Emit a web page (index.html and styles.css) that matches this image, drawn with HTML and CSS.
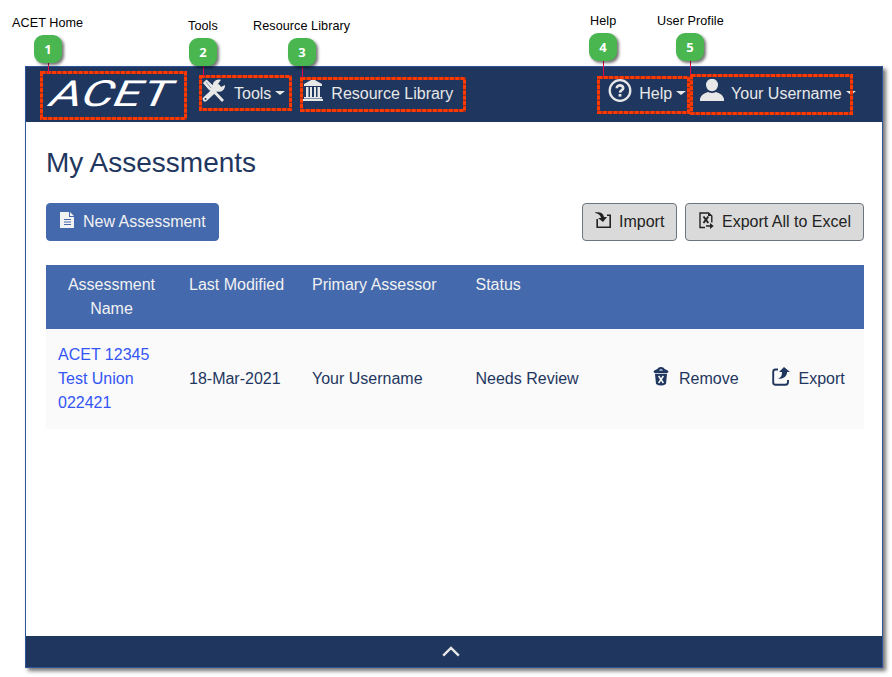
FILE: index.html
```html
<!DOCTYPE html>
<html lang="en">
<head>
<meta charset="utf-8">
<title>My Assessments</title>
<link rel="stylesheet" href="styles.css">
</head>
<body>
<div class="window">
  <header class="navbar">
    <svg class="logo" width="136" height="30" viewBox="0 0 136 30"><text class="logo-text" x="0" y="0" textLength="121" lengthAdjust="spacingAndGlyphs" transform="translate(0 27) skewX(-24)">ACET</text></svg>
    <a class="nav-item nav-tools">
      <svg width="24" height="24" viewBox="0 0 24 24"><path d="M3 3L21 22" stroke="#e8e8e8" stroke-width="2.8"/><path d="M1.5 4L4.5 1L12 8L8 11.5Z" fill="#e8e8e8" stroke="#e8e8e8" stroke-linejoin="round"/><path d="M4 3L9 9" stroke="#8795aa" stroke-width="1"/><path d="M3.2 20L16 8" stroke="#e8e8e8" stroke-width="5" stroke-linecap="round"/><path d="M19 .8A6.2 6.2 0 1 0 23 6L19 8L16 5Z" fill="#e8e8e8"/><circle cx="3.5" cy="20" r="1" fill="#1f375f"/></svg>
      <span>Tools</span><i class="caret"></i>
    </a>
    <a class="nav-item nav-library">
      <svg width="20" height="22" viewBox="0 0 20 22"><path fill="#e8e8e8" d="M10 0L19 5V7H1V5ZM3 8h2.5v10H3zM7 8h2v10H7zM11 8h2v10h-2zM14.5 8H17v10h-2.5zM1 18h18v1.5H1zM0 20h20v2H0z"/></svg>
      <span>Resource Library</span>
    </a>
    <a class="nav-item nav-help">
      <svg width="24" height="24" viewBox="0 0 24 24" fill="none" stroke="#e8e8e8"><circle cx="12" cy="11.5" r="10.3" stroke-width="2.3"/><path d="M8.8 9.2C8.8 5.4 15.3 5.6 15.2 9.1C15.1 11.3 12.1 11.3 12 13.6" stroke-width="2.6"/><path d="M12 15v2.6" stroke-width="2.8"/></svg>
      <span>Help</span><i class="caret"></i>
    </a>
    <a class="nav-item nav-user">
      <svg width="24" height="22" viewBox="0 0 24 22"><ellipse cx="12" cy="6" rx="6" ry="6.2" fill="#e8e8e8"/><path d="M0 22V20C1 15.5 5 14 8 13Q12 15 16 13C19 14 23 15.5 24 20V22Z" fill="#e8e8e8"/></svg>
      <span>Your Username</span><i class="caret"></i>
    </a>
  </header>
  <main>
    <h1>My Assessments</h1>
    <div class="toolbar">
      <button class="btn primary"><svg width="14" height="16" viewBox="0 0 14 16"><path fill="#f2f2f2" d="M0 0H9V5H14V16H0ZM10 0L14 4H10Z"/><path stroke="#4469ad" d="M4 7.5h7M4 10h7M4 12.5h7"/></svg><span>New Assessment</span></button>
      <button class="btn import"><svg width="17" height="17" viewBox="0 0 17 17"><path d="M2.2 7V15.2H15.2V3.2H12" fill="none" stroke="#222" stroke-width="1.6"/><path d="M0 .5C5-.5 8.5 1 9 5H12L8 10L3 6H6C5.5 3 3 1.5 0 1Z" fill="#222"/></svg><span>Import</span></button>
      <button class="btn excel"><svg width="15" height="17" viewBox="0 0 15 17"><path d="M6 15.5H1V1H9.5L12.8 4V10.5" fill="none" stroke="#222" stroke-width="1.4"/><path d="M9 1V4H13Z" fill="#222"/><path d="M4.5 4.5L9.3 11M9.3 4.5L4.5 11" stroke="#222" stroke-width="1.9"/><path d="M7 13.2H11V11L14.7 14L11 17V14.7H7Z" fill="#222"/></svg><span>Export All to Excel</span></button>
    </div>
    <table>
      <colgroup><col class="c-name"><col class="c-date"><col class="c-assessor"><col class="c-status"><col class="c-remove"><col class="c-export"></colgroup>
      <thead><tr><th class="center">Assessment Name</th><th>Last Modified</th><th>Primary Assessor</th><th>Status</th><th></th><th></th></tr></thead>
      <tbody><tr>
        <td><a class="link">ACET 12345 Test Union 022421</a></td><td>18-Mar-2021</td><td>Your Username</td><td>Needs Review</td>
        <td><span class="action"><svg width="16" height="19" viewBox="0 0 16 19"><path d="M.5 5C1 2 5 3 5 1Q8-1 11 1C11 3 15 2 15.5 5L14 6.2H2ZM2 7H14L13 17Q8 20 3 17Z" fill="#1f375f"/><path d="M6 3.5Q8 1 10 3.5Z" fill="#fafafa"/><path d="M5.6 9L10.4 16M10.4 9L5.6 16" stroke="#fafafa" stroke-width="1.5"/></svg><span class="remove-label">Remove</span></span></td>
        <td><span class="action"><svg width="18" height="19" viewBox="0 0 18 19"><path d="M6 2.5H3.5Q1.2 2.5 1.2 5V15.5Q1.2 17.7 3.5 17.7H13.5Q16 17.7 16 15V13" fill="none" stroke="#1f375f" stroke-width="1.9"/><path d="M12 0L18 5H15C15 9 12 12 6 12C9.5 10 10 8 10 5H7Z" fill="#1f375f"/></svg><span class="export-label">Export</span></span></td>
      </tr></tbody>
    </table>
  </main>
  <footer><svg width="18" height="11" viewBox="0 0 18 11"><path d="M1.2 9.6L9 2L16.8 9.6" fill="none" stroke="#e8e8e8" stroke-width="2.4"/></svg></footer>
</div>

<svg class="frames" width="892" height="130" viewBox="0 0 892 130">
  <g class="frame-base"><path d="M41.5 72.5H185.5V118.5H41.5Z"/><path d="M200.5 76.5H290.5V109.5H200.5Z"/><path d="M301.5 78.5H464.5V110.5H301.5Z"/><path d="M598.5 77.5H688.5V112.5H598.5Z"/><path d="M691.5 75.5H851.5V113.5H691.5Z"/></g>
  <g class="frame-dash"><path d="M41.5 72.5H185.5V118.5H41.5Z"/><path d="M200.5 76.5H290.5V109.5H200.5Z"/><path d="M301.5 78.5H464.5V110.5H301.5Z"/><path d="M598.5 77.5H688.5V112.5H598.5Z"/><path d="M691.5 75.5H851.5V113.5H691.5Z"/></g>
  <path class="leader" d="M48.5 62V73M203.5 65V76M302.5 65V78M603.5 61V77M690.5 61V75"/>
</svg>
<span class="note n1">ACET Home</span><span class="note n2">Tools</span><span class="note n3">Resource Library</span><span class="note n4">Help</span><span class="note n5">User Profile</span>
<span class="badge b1">1</span><span class="badge b2">2</span><span class="badge b3">3</span><span class="badge b4">4</span><span class="badge b5">5</span>
</body>
</html>
```
FILE: styles.css
```css
* { box-sizing: border-box; }
body { margin: 0; padding: 66px 9px 9px 25px; height: 677px; overflow: hidden; background: #fff; font: 16px/24px "Liberation Sans", Arial, sans-serif; color: #1f375f; position: relative; }
.window { width: 858px; height: 602px; border: 1px solid #2f549a; display: flex; flex-direction: column; background: #fff; box-shadow: 3px 3px 4px rgba(0,0,0,.55); }
.navbar { height: 55px; flex: none; background: #1f375f; display: flex; align-items: flex-start; padding-left: 20px; color: #e8e8e8; }
.logo { margin-top: 12px; flex: none; overflow: visible; }
.logo-text { font: 36px Roboto, sans-serif; fill: #fff; }
.nav-item { display: flex; align-items: flex-start; padding-top: 12px; white-space: nowrap; }
.nav-item svg { flex: none; }
.nav-item span { margin-top: 3px; }
.nav-tools { margin-left: 20px; }
.nav-tools span { margin-left: 8px; }
.nav-library { margin-left: 18px; }
.nav-library span { margin-left: 8px; }
.nav-help { margin-left: 155px; }
.nav-help span { margin-left: 7px; }
.nav-user { margin-left: 14px; }
.nav-user span { margin-left: 7px; }
.caret { margin: 12px 0 0 4px; border: 5px solid transparent; border-top: 4.5px solid #e8e8e8; border-bottom: 0; }
main { flex: 1; padding: 24px 18px 0 20px; }
h1 { margin: 0; font-size: 28px; font-weight: 400; line-height: 34px; }
.toolbar { display: flex; margin-top: 23px; }
.btn { height: 38px; border: 1px solid #6c757d; border-radius: 4px; display: flex; align-items: flex-start; font: inherit; white-space: nowrap; background: #dadada; color: #222; padding: 6px 12px; }
.btn svg { flex: none; margin-top: 2px; }
.btn.primary { width: 173px; background: #4469ad; border-color: #4469ad; color: #f2f2f2; padding-left: 13px; }
.primary span { margin-left: 9px; }
.import { width: 95px; margin-left: auto; }
.import span { margin-left: 7px; }
.excel { width: 179px; margin-left: 8px; padding-left: 13px; }
.excel span { margin-left: 8px; }
table { width: 818px; margin-top: 24px; table-layout: fixed; border-collapse: collapse; }
.c-name { width: 131px; }
.c-date { width: 123px; }
.c-assessor { width: 163.5px; }
.c-status { width: 177.5px; }
.c-remove { width: 119px; }
.c-export { width: 104px; }
th { height: 64px; padding: 8px 12px; background: #4469ad; color: #f2f2f2; font-weight: 400; text-align: left; vertical-align: top; }
th.center { text-align: center; }
td { height: 100px; padding: 12px; background: #fafafa; vertical-align: middle; white-space: nowrap; }
td:first-child { white-space: normal; }
.link { color: #3355f5; }
.action { display: flex; height: 24px; }
.remove-label { margin-left: 10px; }
.export-label { margin-left: 8.5px; }
footer { height: 31px; flex: none; background: #1f375f; display: flex; justify-content: center; padding: 10px 6px 0 0; }
.frames { position: absolute; left: 0; top: 0; }
.frames path { fill: none; }
.frame-base path { stroke: #8f2a25; stroke-width: 3; }
.frame-dash path { stroke: #ff3a00; stroke-width: 3; stroke-dasharray: 4 1.3; }
.frames .leader { stroke: #e5094c; stroke-width: 1; }
.note { position: absolute; font-size: 12.6px; line-height: 16px; color: #000; white-space: nowrap; letter-spacing: .08px; }
.badge { position: absolute; width: 28px; height: 28px; border-radius: 9px; background: #49b64f; color: #fff; font: bold 13px/28px "Open Sans", sans-serif; text-align: center; box-shadow: 2px 2px 3px rgba(0,0,0,.55); }
.n1 { left: 12px; top: 15px; } .n2 { left: 188px; top: 18px; } .n3 { left: 253px; top: 18px; } .n4 { left: 590px; top: 13px; } .n5 { left: 657px; top: 13px; }
.b1 { left: 34px; top: 35px; } .b2 { left: 189px; top: 38px; } .b3 { left: 288px; top: 38px; } .b4 { left: 589px; top: 33px; } .b5 { left: 676px; top: 33px; }
```
